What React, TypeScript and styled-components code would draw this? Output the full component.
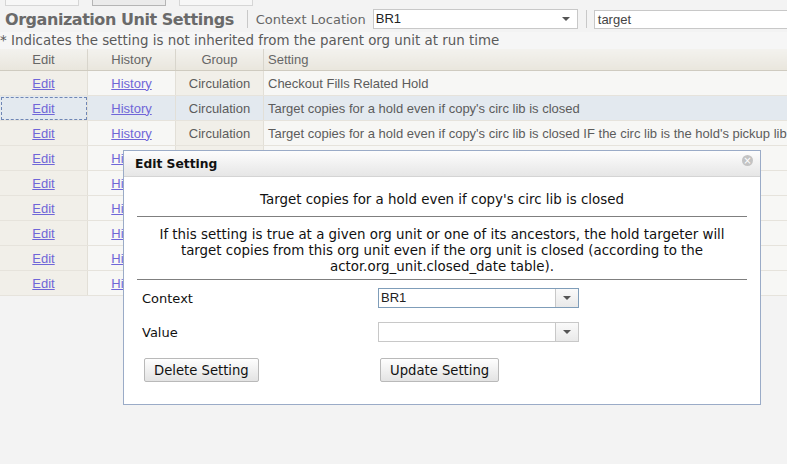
import React from 'react'
import styled, { createGlobalStyle, css } from 'styled-components'

const GlobalStyle = createGlobalStyle`
  html, body {
    margin: 0;
    padding: 0;
    background: #f3f3f3;
  }
  body {
    width: 787px;
    height: 464px;
    overflow: hidden;
    font-family: 'Liberation Sans', Arial, sans-serif;
  }
`

const verdana = `'DejaVu Sans', Verdana, sans-serif`

const Page = styled.div`
  position: relative;
  width: 787px;
  height: 464px;
  background: #f3f3f3;
  overflow: hidden;
`

const Tabs = styled.div`
  display: flex;
  gap: 13px;
  padding-left: 5px;
  height: 6px;
`

const Tab = styled.div<{ active?: boolean }>`
  width: 72px;
  height: 5px;
  border: 1px solid ${p => (p.active ? '#b5b5b5' : '#d6d6d6')};
  border-top: none;
  background: ${p => (p.active ? '#ebebeb' : '#f7f7f7')};
`

const Toolbar = styled.div`
  display: flex;
  align-items: center;
  height: 26px;
  padding-left: 5px;
`

const Title = styled.h1`
  margin: 0;
  font-family: ${verdana};
  font-size: 16px;
  font-weight: bold;
  color: #6a6a6a;
  letter-spacing: -0.45px;
`

const Divider = styled.span<{ before: number; after: number }>`
  width: 1px;
  height: 18px;
  background: #c8c8c8;
  margin: 0 ${p => p.after}px 0 ${p => p.before}px;
`

const ToolLabel = styled.span`
  font-family: ${verdana};
  font-size: 13px;
  color: #666;
  margin-right: 7px;
`

const ComboBox = styled.div<{ w: number; focused?: boolean }>`
  display: flex;
  width: ${p => p.w}px;
  height: 18px;
  border: 1px solid ${p => (p.focused ? '#7f9db9' : '#c8c8c8')};
  background: #fff;
`

const ComboText = styled.div`
  flex: 1;
  font-family: 'Liberation Sans', Arial, sans-serif;
  font-size: 13px;
  line-height: 18px;
  padding-left: 2px;
  color: #222;
`

const ComboArrow = styled.div<{ bordered?: boolean }>`
  width: 22px;
  display: flex;
  align-items: center;
  justify-content: center;
  ${p => p.bordered && css`
    border-left: 1px solid #c8c8c8;
    background: linear-gradient(#fafafa, #e9e9e9);
  `}
  &::after {
    content: '';
    border-left: 4px solid transparent;
    border-right: 4px solid transparent;
    border-top: 4px solid #555;
  }
`

const SearchInput = styled.div`
  flex: 1;
  height: 17px;
  border: 1px solid #c8c8c8;
  border-right: none;
  background: #fff;
  font-family: 'Liberation Sans', Arial, sans-serif;
  font-size: 13px;
  line-height: 17px;
  padding-left: 3px;
  color: #444;
`

const Note = styled.div`
  font-family: ${verdana};
  font-size: 13.4px;
  color: #5a5a5a;
  height: 17px;
  line-height: 17px;
  white-space: nowrap;
  background: #f6f6f6;
`

const Grid = styled.table`
  border-collapse: collapse;
  table-layout: fixed;
  width: 1000px;
  font-family: 'Liberation Sans', Arial, sans-serif;
  font-size: 13px;
  color: #5c5c5c;
`

const HeadCell = styled.th<{ w?: number }>`
  width: ${p => (p.w ? `${p.w}px` : 'auto')};
  height: 21px;
  padding: 0 4px;
  font-weight: normal;
  text-align: ${p => (p.w ? 'center' : 'left')};
  background: linear-gradient(#f3f2ee, #e9e6dd);
  border-right: 1px solid #d8d5cc;
  border-bottom: 1px solid #cfcbc0;
  color: #666;
`

const Row = styled.tr<{ selected?: boolean }>`
  height: 25px;
  background: ${p => (p.selected ? '#e3e9ef' : '#f7f7f5')};
`

const Cell = styled.td<{ center?: boolean; shade?: boolean; focus?: boolean }>`
  padding: 0 4px;
  white-space: nowrap;
  overflow: hidden;
  text-align: ${p => (p.center ? 'center' : 'left')};
  border-right: 1px solid #e2dfd7;
  border-bottom: 1px solid #e6e3dc;
  ${p => p.shade && css`background: #f1efe9;`}
  ${p => p.focus && css`outline: 1px dashed #6f86b5; outline-offset: -2px;`}
`

const Link = styled.a`
  color: #6f66d8;
  text-decoration: underline;
  cursor: pointer;
`

const Dialog = styled.div`
  position: absolute;
  left: 123px;
  top: 150px;
  width: 636px;
  height: 253px;
  border: 1px solid #9aabc7;
  background: #fff;
  font-family: ${verdana};
  font-size: 13.4px;
  color: #111;
`

const DialogBar = styled.div`
  display: flex;
  align-items: center;
  justify-content: space-between;
  height: 25px;
  padding: 0 7px 0 11px;
  background: linear-gradient(#fdfdfd, #e6e6e6);
  border-bottom: 1px solid #d4d4d4;
`

const DialogTitle = styled.span`
  font-weight: bold;
  font-size: 12.3px;
  color: #111;
`

const CloseIcon = styled.span`
  width: 11px;
  height: 11px;
  border-radius: 50%;
  background: #c3c3c3;
  display: flex;
  align-items: center;
  justify-content: center;
  color: #fff;
  font-size: 10px;
  line-height: 1;
  margin-top: -6px;
`

const DialogBody = styled.div`
  padding: 15px 13px 0 13px;
`

const SettingName = styled.div`
  text-align: center;
  line-height: 16px;
  padding-bottom: 8px;
  border-bottom: 1px solid #7f7f7f;
`

const Description = styled.div`
  text-align: center;
  line-height: 16px;
  padding: 10px 8px 4px;
  border-bottom: 1px solid #7f7f7f;
`

const Form = styled.div`
  display: grid;
  grid-template-columns: 236px 202px;
  row-gap: 14px;
  padding: 8px 0 0 5px;
  align-items: center;
`

const FieldLabel = styled.span`
  font-size: 13px;
`

const Button = styled.button`
  justify-self: start;
  height: 24px;
  padding: 0 9px;
  margin: 2px 0 0 2px;
  border: 1px solid #b9b9b9;
  border-radius: 2px;
  background: linear-gradient(#fefefe, #e3e3e3);
  font-family: ${verdana};
  font-size: 13.2px;
  color: #111;
`

const rows = [
  { text: 'Checkout Fills Related Hold', group: 'Circulation' },
  { text: "Target copies for a hold even if copy's circ lib is closed", group: 'Circulation' },
  { text: "Target copies for a hold even if copy's circ lib is closed IF the circ lib is the hold's pickup lib", group: 'Circulation' },
  { text: '', group: '' },
  { text: '', group: '' },
  { text: '', group: '' },
  { text: '', group: '' },
  { text: '', group: '' },
  { text: '', group: '' },
]

export default function App() {
  return (
    <Page>
      <GlobalStyle />
      <Tabs>
        <Tab />
        <Tab active />
        <Tab />
      </Tabs>
      <Toolbar>
        <Title>Organization Unit Settings</Title>
        <Divider before={13} after={8} />
        <ToolLabel>Context Location</ToolLabel>
        <ComboBox w={203}>
          <ComboText>BR1</ComboText>
          <ComboArrow />
        </ComboBox>
        <Divider before={8} after={7} />
        <SearchInput>target</SearchInput>
      </Toolbar>
      <Note>* Indicates the setting is not inherited from the parent org unit at run time</Note>
      <Grid>
        <thead>
          <tr>
            <HeadCell w={79}>Edit</HeadCell>
            <HeadCell w={79}>History</HeadCell>
            <HeadCell w={79}>Group</HeadCell>
            <HeadCell>Setting</HeadCell>
          </tr>
        </thead>
        <tbody>
          {rows.map((r, i) => (
            <Row key={i} selected={i === 1}>
              <Cell center shade={i !== 1} focus={i === 1}><Link>Edit</Link></Cell>
              <Cell center><Link>History</Link></Cell>
              <Cell center shade={i !== 1}>{r.group}</Cell>
              <Cell>{r.text}</Cell>
            </Row>
          ))}
        </tbody>
      </Grid>
      <Dialog>
        <DialogBar>
          <DialogTitle>Edit Setting</DialogTitle>
          <CloseIcon>×</CloseIcon>
        </DialogBar>
        <DialogBody>
          <SettingName>Target copies for a hold even if copy's circ lib is closed</SettingName>
          <Description>
            If this setting is true at a given org unit or one of its ancestors, the hold targeter will target copies from this org unit even if the org unit is closed (according to the actor.org_unit.closed_date table).
          </Description>
          <Form>
            <FieldLabel>Context</FieldLabel>
            <ComboBox w={199} focused>
              <ComboText>BR1</ComboText>
              <ComboArrow bordered />
            </ComboBox>
            <FieldLabel>Value</FieldLabel>
            <ComboBox w={199}>
              <ComboText />
              <ComboArrow bordered />
            </ComboBox>
            <Button>Delete Setting</Button>
            <Button>Update Setting</Button>
          </Form>
        </DialogBody>
      </Dialog>
    </Page>
  )
}
